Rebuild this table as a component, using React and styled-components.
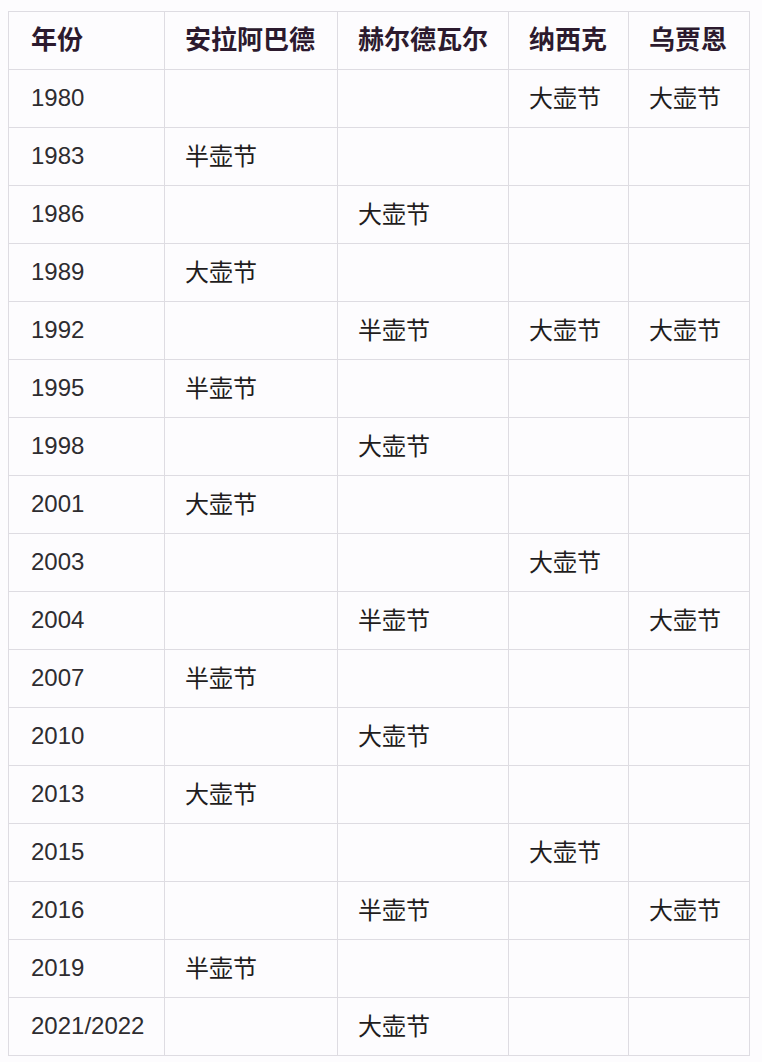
import React from 'react'
import styled, { createGlobalStyle } from 'styled-components'

const GlobalStyle = createGlobalStyle`
    html, body{
        margin: 0;
        padding: 0;
        background: #fdfcfe;
    }
    body{
        font-family: "Liberation Sans", "Noto Sans CJK SC", sans-serif;
    }
`

const Page = styled.div`
    padding: 11px 14px 0 8px;
`

const Table = styled.table`
    width: 741px;
    table-layout: fixed;
    border-collapse: collapse;
    background: #fdfcfe;
`

const HeadCell = styled.th`
    box-sizing: border-box;
    height: 58px;
    padding: 0 0 1px ${p => (p.$first ? 22 : 20)}px;
    line-height: 30px;
    text-align: left;
    font-size: 26px;
    font-weight: bold;
    color: #2c1a2e;
    border: 1px solid #dedce2;
    white-space: nowrap;
`

const Cell = styled.td`
    box-sizing: border-box;
    height: 58px;
    padding: 0 0 ${p => (p.$year ? 1 : 0)}px ${p => (p.$year ? 22 : 20)}px;
    line-height: 28px;
    font-size: 24px;
    color: ${p => (p.$year ? '#2e2c30' : '#1f1d20')};
    border: 1px solid #dedce2;
    white-space: nowrap;
`

const columns = [
    { name: '年份', width: 156 },
    { name: '安拉阿巴德', width: 173 },
    { name: '赫尔德瓦尔', width: 171 },
    { name: '纳西克', width: 120 },
    { name: '乌贾恩', width: 121 },
]

const D = '大壶节'
const B = '半壶节'

const rows = [
    ['1980', '', '', D, D],
    ['1983', B, '', '', ''],
    ['1986', '', D, '', ''],
    ['1989', D, '', '', ''],
    ['1992', '', B, D, D],
    ['1995', B, '', '', ''],
    ['1998', '', D, '', ''],
    ['2001', D, '', '', ''],
    ['2003', '', '', D, ''],
    ['2004', '', B, '', D],
    ['2007', B, '', '', ''],
    ['2010', '', D, '', ''],
    ['2013', D, '', '', ''],
    ['2015', '', '', D, ''],
    ['2016', '', B, '', D],
    ['2019', B, '', '', ''],
    ['2021/2022', '', D, '', ''],
]

export default function App() {
    return (
        <Page>
            <GlobalStyle />
            <Table>
                <colgroup>
                    {columns.map(c => (
                        <col key={c.name} style={{ width: c.width }} />
                    ))}
                </colgroup>
                <thead>
                    <tr>
                        {columns.map((c, i) => (
                            <HeadCell key={c.name} $first={i === 0}>{c.name}</HeadCell>
                        ))}
                    </tr>
                </thead>
                <tbody>
                    {rows.map(r => (
                        <tr key={r[0]}>
                            {r.map((v, i) => (
                                <Cell key={i} $year={i === 0}>{v}</Cell>
                            ))}
                        </tr>
                    ))}
                </tbody>
            </Table>
        </Page>
    )
}
